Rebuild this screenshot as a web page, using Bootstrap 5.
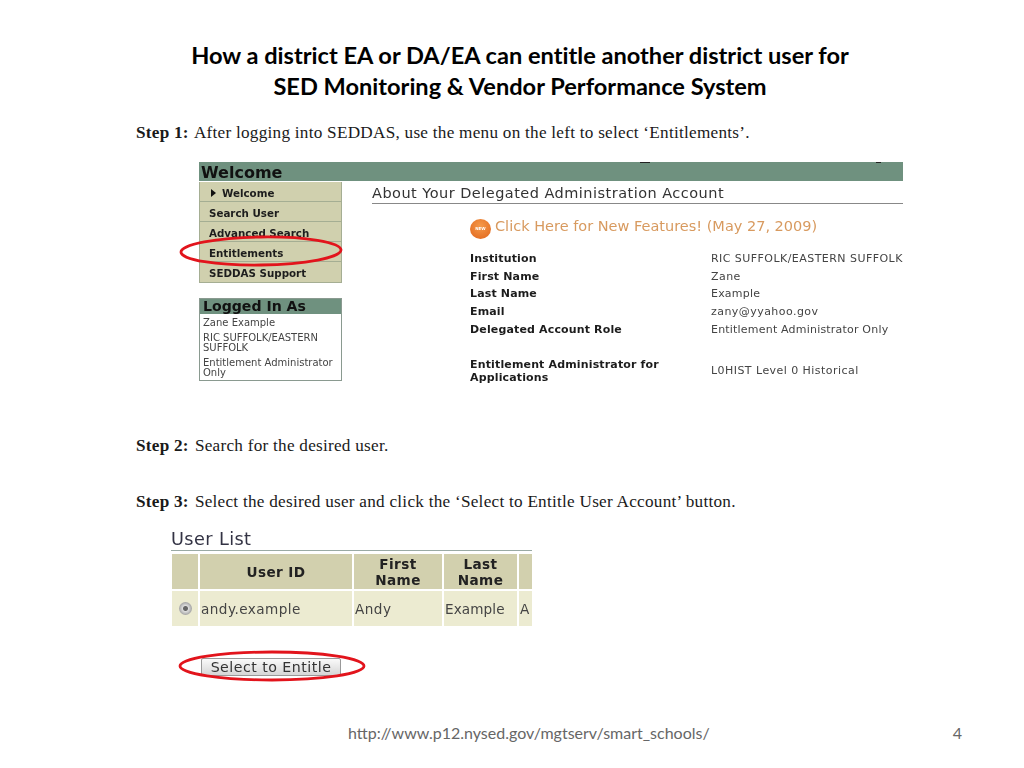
<!DOCTYPE html>
<html lang="en"><head><meta charset="utf-8"><title>Slide 4</title>
<link rel="stylesheet" href="https://cdn.jsdelivr.net/npm/bootstrap@5.3.0/dist/css/bootstrap.min.css">
<style>
html,body{margin:0;background:#fff;overflow:hidden}
.slide{width:1024px;height:768px;padding:40px 0 0 136px;color:#000}
.slide-title{font:700 23.6px/31px Lato,sans-serif;font-variant-ligatures:none;color:#000;text-align:center;width:768px;margin:0}
.step{font:17.2px/20px "Liberation Serif",serif;letter-spacing:.25px;margin:0;color:#1a1a1a}
.step b{margin-right:1.5px}
.s1{margin-top:21px}.s2{margin-top:53px}.s3{margin-top:36px}
.shot{font-family:"DejaVu Sans",sans-serif;filter:blur(.35px);position:relative}
.shot1{width:704px;margin:19px 0 0 63px;height:221px}
.band{height:19px;background:#6f917f;font:700 16px/21px "DejaVu Sans",sans-serif;color:#111;padding-left:2px}
.side{width:143px;flex:none}
.menu{border:1px solid #a5ae93;border-top:0;margin-top:1px;background:#d0d0ae}
.menu-row{height:20px;border-bottom:1px solid #a5ae93;font:700 10.3px/22px "DejaVu Sans",sans-serif;padding-left:9px;color:#1d1d1d}
.menu-row:last-child{border-bottom:0}
.menu-first{padding:3px 0 0 11px;gap:6px;line-height:16px}
.tri{width:0;height:0;border-left:5px solid #111;border-top:4px solid transparent;border-bottom:4px solid transparent}
.logged{margin-top:15px;border:1px solid #8a9a90;height:83px;font-size:10px;line-height:10.5px;color:#444}
.logged-head{background:#6f917f;font:700 14.1px/15px "DejaVu Sans",sans-serif;color:#111;padding-left:3px;height:15px}
.logged p{margin:0;padding:0 3px}
.about-col{margin-left:30px;flex:1}
.about{font-size:14.5px;letter-spacing:.47px;line-height:18px;color:#333;border-bottom:1px solid #888;height:20px;margin-top:3px;white-space:nowrap}
.feature{margin:10px 0 0 98px;font-size:14.5px;line-height:24px;color:#d89a5f;gap:4px;white-space:nowrap}
.orb{width:21px;height:20px;border-radius:50%;background:radial-gradient(circle at 50% 35%,#f59a4a,#e0641a);color:#fff;font:700 4px/20px "DejaVu Sans",sans-serif;text-align:center;flex:none;margin-top:5px}
.info{margin:11px 0 0 98px;display:grid;grid-template-columns:241px 1fr;grid-auto-rows:17.7px;font-size:11px;letter-spacing:.45px;line-height:17.7px;color:#444;white-space:nowrap}
.info b{color:#1c1c1c;font-size:11px;letter-spacing:.15px}
.gap-row{grid-column:1/3;height:17.7px}
.info .app-lab{line-height:13px;height:26px;padding-top:2px;white-space:normal;width:205px}
.app-val{line-height:13px;padding-top:8px}
.tight{letter-spacing:.2px}
.shot2{width:361px;margin:17px 0 0 35px;height:160px}
.ulist{font-size:17.7px;letter-spacing:.4px;line-height:21px;color:#334;border-bottom:1px solid #9aaaa5;height:22px}
.utable{display:grid;grid-template-columns:26px 152px 88px 73px 14px;gap:2px;margin:3px 0 0 1px;width:360px;overflow:hidden}
.uh{background:#d2d0ae;height:35px;font:700 13.6px/16px "DejaVu Sans",sans-serif;letter-spacing:.4px;color:#222;display:flex;align-items:center;justify-content:center;text-align:center}
.uc{background:#ecebd1;height:35px;font-size:13.6px;letter-spacing:.45px;line-height:37px;color:#444;padding-left:1px;white-space:nowrap;overflow:hidden}
.uc-tight{letter-spacing:.1px}
.radio-dot{width:13px;height:13px;border-radius:50%;background:radial-gradient(circle,#666 0 2px,#ddd 3px,#aaa 6px);margin:11px auto 0}
.sel{margin:32px 0 0 30px;height:18px;width:140px;border:1px solid #999;border-radius:2px;background:linear-gradient(#fafafa,#d6d6d6);font-size:14.2px;letter-spacing:.47px;line-height:14px;text-align:center;color:#333;padding:0;white-space:nowrap}
.ring{position:absolute;pointer-events:none}
.foot{font:16px/20px Lato,sans-serif;color:#666;margin-top:34px;width:826px;padding-left:212px}
.mark-bit{position:absolute;top:0;height:1px;background:#222}
</style></head>
<body>
<main class="slide">
  <h1 class="slide-title">How a district EA or DA/EA can entitle another district user for<br>SED Monitoring &amp; Vendor Performance System</h1>
  <p class="step s1"><b>Step 1:</b> After logging into SEDDAS, use the menu on the left to select ‘Entitlements’.</p>
  <section class="shot shot1">
    <div class="band">Welcome</div>
    <span class="mark-bit" style="left:441px;width:10px"></span><span class="mark-bit" style="left:677px;width:5px"></span>
    <div class="d-flex">
      <div class="side">
        <div class="menu">
          <div class="menu-row menu-first d-flex align-items-center"><span class="tri"></span><span>Welcome</span></div>
          <div class="menu-row">Search User</div>
          <div class="menu-row">Advanced Search</div>
          <div class="menu-row">Entitlements</div>
          <div class="menu-row">SEDDAS Support</div>
        </div>
        <div class="logged">
          <div class="logged-head">Logged In As</div>
          <p class="pt-1">Zane Example</p>
          <p class="pt-1">RIC SUFFOLK/EASTERN SUFFOLK</p>
          <p class="pt-1">Entitlement Administrator Only</p>
        </div>
      </div>
      <div class="about-col">
        <div class="about">About Your Delegated Administration Account</div>
        <div class="feature d-flex"><span class="orb">NEW</span><span>Click Here for New Features! (May 27, 2009)</span></div>
        <div class="info">
          <b>Institution</b><span>RIC SUFFOLK/EASTERN SUFFOLK</span>
          <b>First Name</b><span>Zane</span>
          <b>Last Name</b><span class="tight">Example</span>
          <b>Email</b><span>zany@yyahoo.gov</span>
          <b>Delegated Account Role</b><span class="tight">Entitlement Administrator Only</span>
          <div class="gap-row"></div>
          <b class="app-lab">Entitlement Administrator for Applications</b><span class="app-val">L0HIST Level 0 Historical</span>
        </div>
      </div>
    </div>
    <svg class="ring" style="left:-21px;top:72px" width="166" height="34"><ellipse cx="83" cy="17" rx="80" ry="14" fill="none" stroke="#e2141c" stroke-width="2.8" transform="rotate(-.8 83 17)"/></svg>
  </section>
  <p class="step s2"><b>Step 2:</b> Search for the desired user.</p>
  <p class="step s3"><b>Step 3:</b> Select the desired user and click the ‘Select to Entitle User Account’ button.</p>
  <section class="shot shot2">
    <div class="ulist">User List</div>
    <div class="utable">
      <div class="uh"></div><div class="uh">User ID</div><div class="uh">First<br>Name</div><div class="uh">Last<br>Name</div><div class="uh"></div>
      <div class="uc"><div class="radio-dot"></div></div><div class="uc">andy.example</div><div class="uc">Andy</div><div class="uc uc-tight">Example</div><div class="uc">A</div>
    </div>
    <button type="button" class="btn sel">Select to Entitle</button>
    <svg class="ring" style="left:7px;top:120px" width="188" height="34"><ellipse cx="94" cy="17" rx="92" ry="14" fill="none" stroke="#e2141c" stroke-width="2.8"/></svg>
  </section>
  <div class="foot d-flex justify-content-between"><span>http://www.p12.nysed.gov/mgtserv/smart_schools/</span><span>4</span></div>
</main>
<script src="https://cdn.jsdelivr.net/npm/bootstrap@5.3.0/dist/js/bootstrap.bundle.min.js"></script>
</body></html>
